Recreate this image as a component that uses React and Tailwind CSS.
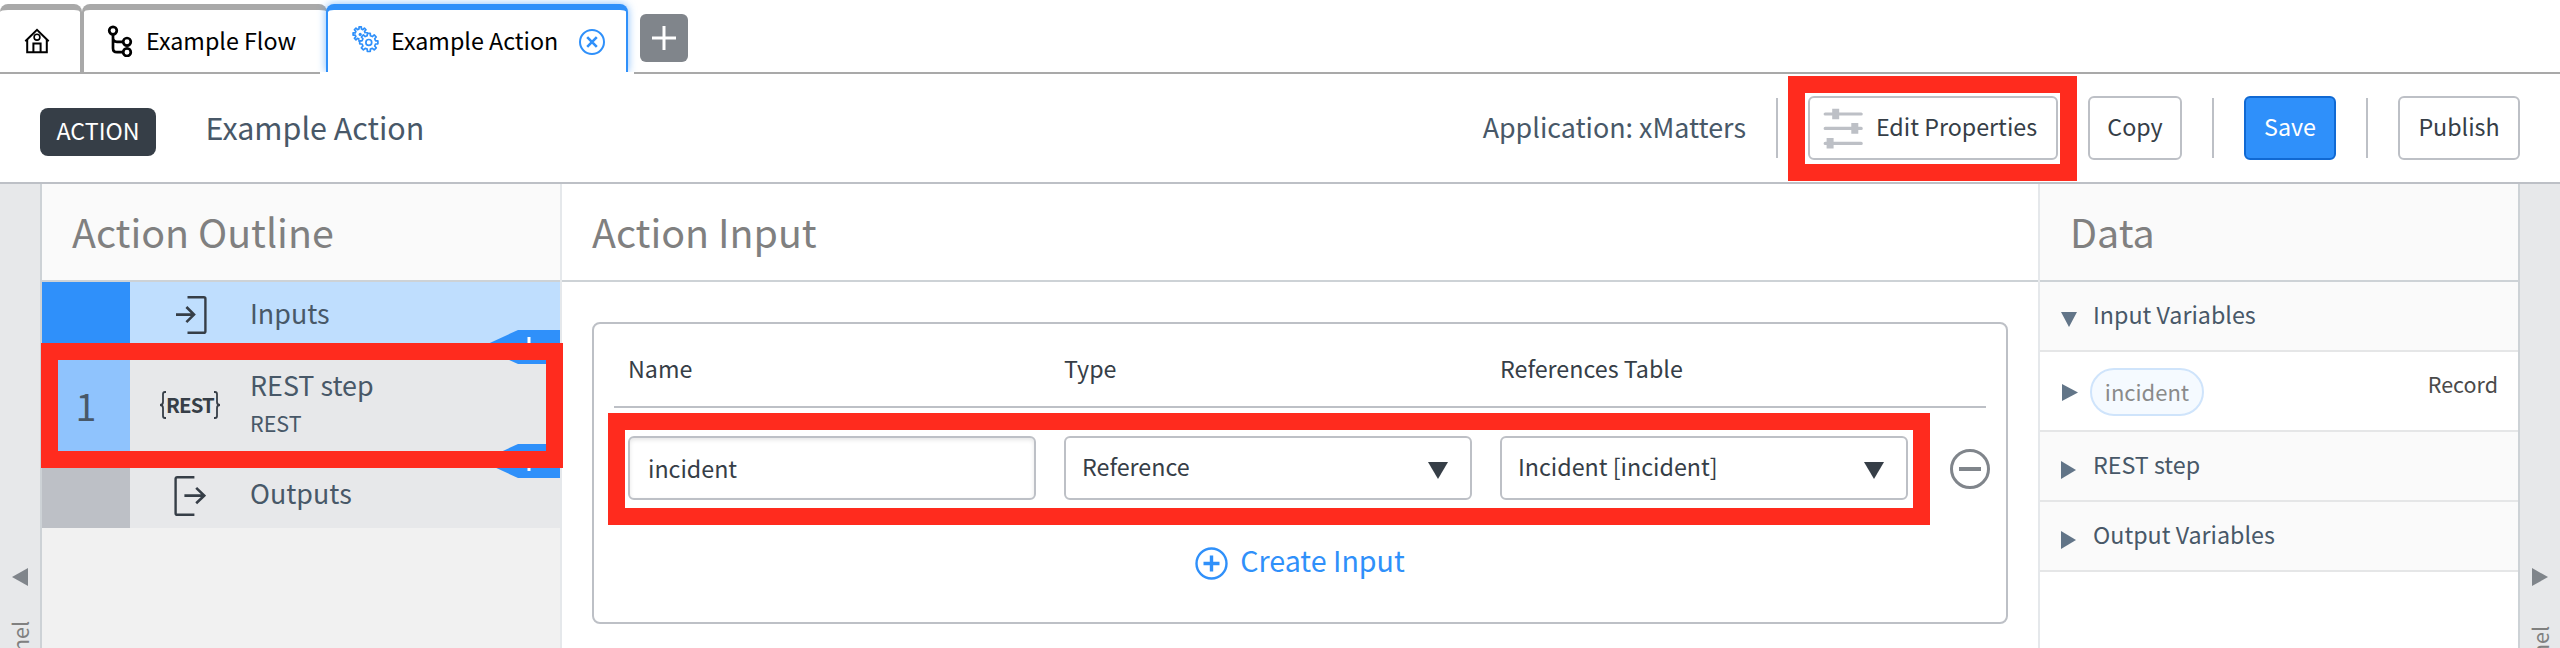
import React from "react";

function gearPath(cx, cy, outer, inner, teeth) {
  const pts = [];
  const step = (Math.PI * 2) / teeth;
  for (let i = 0; i < teeth; i++) {
    const a = i * step - Math.PI / 2;
    [
      [-0.3, inner],
      [-0.2, outer],
      [0.2, outer],
      [0.3, inner],
    ].forEach(([k, r]) => {
      pts.push(`${(cx + Math.cos(a + k * step) * r).toFixed(2)} ${(cy + Math.sin(a + k * step) * r).toFixed(2)}`);
    });
  }
  return `M${pts.join("L")}Z`;
}

function HomeIcon() {
  return (
    <svg className="h-[26px] w-[26px]" viewBox="0 0 26 26" fill="none" stroke="#000" strokeWidth="2">
      <path d="M1.3 13.2 13 1.8l11.7 11.4" />
      <path d="M3.2 11.5v12.8h19.6V11.5" />
      <circle cx="13" cy="9.2" r="2.9" strokeWidth="1.6" />
      <path d="M9.4 24v-8.4h7.2V24" />
    </svg>
  );
}

function FlowIcon() {
  return (
    <svg className="h-8 w-[26px]" viewBox="0 0 26 32" fill="none" stroke="#000" strokeWidth="2.7">
      <circle cx="6" cy="5.6" r="3.8" />
      <circle cx="20" cy="16.8" r="3.8" />
      <circle cx="20" cy="27.2" r="3.8" />
      <path d="M6 9.4v13.8q0 4 4 4h6M6 13q0 3.8 4 3.8h6" />
    </svg>
  );
}

function GearsIcon() {
  return (
    <svg className="h-7 w-7" viewBox="0 0 28 28" fill="none" stroke="#2f90fa" strokeWidth="1.7" strokeLinejoin="round">
      <path d={gearPath(9.2, 9, 7.2, 5.1, 8)} />
      <circle cx="9.2" cy="9.4" r="1.6" fill="#2f90fa" stroke="none" />
      <circle cx="17.8" cy="17.4" r="9.6" fill="#fff" stroke="none" />
      <path d={gearPath(17.8, 17.4, 9.2, 6.9, 8)} fill="#fff" />
      <circle cx="17.8" cy="17.4" r="2.9" />
    </svg>
  );
}

function CloseIcon() {
  return (
    <svg className="size-[26px]" viewBox="0 0 26 26" fill="none" stroke="#2f90fa">
      <circle cx="13" cy="13" r="12" strokeWidth="2" />
      <path d="m8.2 8.2 9.6 9.6m0-9.6-9.6 9.6" strokeWidth="2.6" />
    </svg>
  );
}

function SlidersIcon() {
  return (
    <svg className="h-[44px] w-10" viewBox="0 0 40 44" stroke="#bdc0c6" fill="#bdc0c6">
      <path d="M2.2 8h36M2.2 22.4h36M2.2 37.4h36" strokeWidth="3.2" strokeLinecap="round" />
      <path stroke="none" d="M9.2 2.7h7v10.6h-7zM28.3 17h7v10.8h-7zM3.6 32h7v10.6h-7z" />
    </svg>
  );
}

function InputsIcon() {
  return (
    <svg className="h-10 w-8" viewBox="0 0 32 40" fill="none" stroke="#363e47" strokeWidth="2.4">
      <path d="M12.5 2.2h16.3q1.6 0 1.6 1.6v32.4q0 1.6-1.6 1.6H12.5" />
      <path d="M1 19.6h18.6M11.4 12l7.6 7.6-7.6 7.6" strokeWidth="2.6" />
    </svg>
  );
}

function OutputsIcon() {
  return (
    <svg className="h-10 w-8" viewBox="0 0 32 40" fill="none" stroke="#363e47" strokeWidth="2.4">
      <path d="M20.4 1.2H3.2q-1.6 0-1.6 1.6v34.4q0 1.6 1.6 1.6h17.2" />
      <path d="M10.4 19.6h20M22.2 11.9l8 7.7-8 7.7" strokeWidth="2.6" />
    </svg>
  );
}

function RestIcon() {
  return (
    <div className="flex h-7 w-[60px] items-center justify-between text-[#363e47]">
      <svg className="h-7 w-[6px]" viewBox="0 0 6 28" fill="none" stroke="#363e47" strokeWidth="1.8">
        <path d="M6 1H5Q3 1 3 3v8q0 3-3 3q3 0 3 3v8q0 2 2 2h1" />
      </svg>
      <span className="-mx-1 pb-[2px] text-[20.4px] leading-7 font-bold tracking-[-0.9px]">REST</span>
      <svg className="h-7 w-[6px]" viewBox="0 0 6 28" fill="none" stroke="#363e47" strokeWidth="1.8">
        <path d="M0 1h1Q3 1 3 3v8q0 3 3 3q-3 0-3 3v8q0 2-2 2H0" />
      </svg>
    </div>
  );
}

function AddStepTag() {
  return (
    <svg className="h-[34px] w-[79px]" viewBox="0 0 79 34">
      <path d="M0 17 37 0h42v34H37z" fill="#2f90fa" />
      <path d="M48 7v20M38 17h20" stroke="#fff" strokeWidth="3" />
    </svg>
  );
}

function Down({ className }) {
  return (
    <svg className={className} viewBox="0 0 20 17" preserveAspectRatio="none" fill="currentColor">
      <path d="M0 0h20L10 17z" />
    </svg>
  );
}

function Right({ className }) {
  return (
    <svg className={className} viewBox="0 0 16 18" preserveAspectRatio="none" fill="currentColor">
      <path d="M0 0v18l16-9z" />
    </svg>
  );
}

function Button({ className, children }) {
  return (
    <button className={`flex h-16 items-center justify-center rounded-md border-2 pb-1 text-[23.28px] leading-8 whitespace-nowrap ${className}`}>
      {children}
    </button>
  );
}

function Divider({ className }) {
  return <div className={`h-[60px] w-[2px] bg-[#bdc0c6] ${className}`} />;
}

function Highlight({ className }) {
  return <div className={`pointer-events-none absolute z-20 border-[17px] border-[#ff2b1e] ${className}`} />;
}

function Tabs() {
  return (
    <nav className="flex h-[74px] items-start border-b-2 border-[#a9a9a9] pt-1 text-[23.28px] text-black">
      <div className="flex h-[68px] w-[82px] items-center rounded-t-lg border-t-[6px] border-r-2 border-[#a9a9a9] pb-[1px] pl-6">
        <HomeIcon />
      </div>
      <div className="flex h-[68px] w-[245px] items-center rounded-t-lg border-t-[6px] border-l-2 border-[#a9a9a9] pl-[23px]">
        <FlowIcon />
        <span className="pb-[2px] pl-[13px] leading-8 whitespace-nowrap">Example Flow</span>
      </div>
      <div className="relative -ml-px h-[68px] w-[302px]">
        <div className="flex h-[68px] items-center rounded-t-lg border-x-2 border-t-[6px] border-[#2f90fa] bg-white pl-[23px] shadow-[0_0_8px_#2f90fa99] [clip-path:inset(-12px_-12px_0_-12px)]">
          <span className="pb-[5px]">
            <GearsIcon />
          </span>
          <span className="pb-[2px] pl-[12px] leading-8 whitespace-nowrap">Example Action</span>
          <span className="pt-[2px] pl-[21px]">
            <CloseIcon />
          </span>
        </div>
        <div className="absolute -bottom-[2px] -left-[6px] h-[2px] w-[314px] bg-white" />
      </div>
      <div className="mt-[10px] ml-3 flex size-12 items-center justify-center rounded-md bg-[#80858b]">
        <svg className="size-6" viewBox="0 0 24 24" stroke="#fff" strokeWidth="3">
          <path d="M12 0v24M0 12h24" />
        </svg>
      </div>
    </nav>
  );
}

function Toolbar() {
  return (
    <header className="flex h-[110px] items-center border-b-2 border-[#bdc0c6] pr-10 pl-10 text-[#363e47]">
      <span className="mt-2 flex h-12 w-[116px] items-center justify-center rounded-lg bg-[#363e47] pb-1 text-[23.28px] leading-8 text-white">ACTION</span>
      <span className="pb-[2px] pl-[49.5px] text-[30.44px] leading-10 whitespace-nowrap text-[#485868]">Example Action</span>
      <span className="ml-auto pb-[2px] text-[26.86px] leading-10 whitespace-nowrap text-[#485868]">Application: xMatters</span>
      <Divider className="ml-[30px]" />
      <div className="relative ml-[30px]">
        <Button className="w-[250px] gap-[13px] border-[#bdc0c6] !pb-0 pr-[6px]">
          <SlidersIcon />
          <span className="pb-1">Edit Properties</span>
        </Button>
        <Highlight className="-top-5 -left-5 h-[105px] w-[289px]" />
      </div>
      <Button className="ml-[30px] w-[94px] border-[#bdc0c6]">Copy</Button>
      <Divider className="ml-[30px]" />
      <Button className="ml-[30px] w-[92px] border-[#1069d3] bg-[#2f90fa] text-white">Save</Button>
      <Divider className="ml-[30px]" />
      <Button className="ml-[30px] w-[122px] border-[#bdc0c6]">Publish</Button>
    </header>
  );
}

function PanelTitle({ className, children }) {
  return (
    <h2 className={`flex h-[98px] items-center border-b-2 border-[#cdd2d6] pb-[2px] text-[39.39px] leading-[48px] text-[#808080] ${className}`}>
      {children}
    </h2>
  );
}

function Outline() {
  return (
    <section className="w-[522px] border-x-2 border-l-[#cdd2d6] border-r-[#e5e8eb] bg-[#f1f1f1]">
      <PanelTitle className="bg-[#fafafa] pl-[30px]">Action Outline</PanelTitle>
      <div className="relative text-[26.86px] text-[#485868]">
        <div className="flex h-[66px] bg-[#bfdefe]">
          <div className="w-[88px] bg-[#2f90fa]" />
          <div className="flex w-[120px] items-center pl-[45px]">
            <InputsIcon />
          </div>
          <span className="pt-[11px] leading-10">Inputs</span>
        </div>
        <div className="flex h-[114px] bg-[#e7e8ea]">
          <div className="flex w-[88px] items-center justify-center bg-[#8fc3fd] text-[37.6px]">1</div>
          <div className="flex w-[120px] items-center pl-[30px]">
            <RestIcon />
          </div>
          <div className="flex flex-col pt-[19px]">
            <span className="leading-9">REST step</span>
            <span className="text-[21.49px] leading-[39px]">REST</span>
          </div>
        </div>
        <div className="flex h-[66px] bg-[#e7e8ea]">
          <div className="w-[88px] bg-[#bdc0c6]" />
          <div className="flex w-[120px] items-center pt-[2px] pl-[44px]">
            <OutputsIcon />
          </div>
          <span className="pt-[11px] leading-10">Outputs</span>
        </div>
        <div className="absolute top-[48px] right-0">
          <AddStepTag />
        </div>
        <div className="absolute top-[162px] right-0">
          <AddStepTag />
        </div>
        <Highlight className="top-[61px] -left-px h-[125px] w-[522px]" />
      </div>
    </section>
  );
}

function Select({ children }) {
  return (
    <div className="flex h-16 w-[408px] items-center justify-between rounded-md border-2 border-[#bdc0c6] pr-[22px] pl-4">
      <span className="pb-1 leading-8 whitespace-nowrap">{children}</span>
      <Down className="mt-1 h-[17px] w-5" />
    </div>
  );
}

function ActionInput() {
  return (
    <main className="flex-1 bg-white">
      <PanelTitle className="pl-[30px]">Action Input</PanelTitle>
      <div className="mt-10 ml-[30px] h-[302px] w-[1416px] rounded-lg border-2 border-[#bdc0c6] px-5 text-[23.28px] text-[#363e47]">
        <div className="flex h-[84px] items-center border-b-2 border-[#bdc0c6] pt-[6px] pl-[14px] leading-8">
          <span className="w-[436px]">Name</span>
          <span className="w-[436px]">Type</span>
          <span>References Table</span>
        </div>
        <div className="relative mt-7 flex items-center pl-[14px]">
          <div className="flex gap-7">
            <div className="flex h-16 w-[408px] items-center rounded-md border-2 border-[#bdc0c6] pl-[18px] leading-8 shadow-[inset_0_2px_4px_#0000001a]">incident</div>
            <Select>Reference</Select>
            <Select>Incident [incident]</Select>
          </div>
          <svg className="mt-[2px] ml-[42px] size-10 shrink-0" viewBox="0 0 40 40" fill="none" stroke="#80858b">
            <circle cx="20" cy="20" r="18.5" strokeWidth="3" />
            <path d="M9 20h22" strokeWidth="4" />
          </svg>
          <Highlight className="-top-[23px] -left-[6px] h-[112px] w-[1322px]" />
        </div>
        <div className="mt-10 flex items-center justify-center text-[#2f90fa]">
          <svg className="mt-[7px] size-[33px]" viewBox="0 0 33 33" fill="none" stroke="#2f90fa">
            <circle cx="16.5" cy="16.5" r="15" strokeWidth="2.4" />
            <path d="M16.5 8.5v16M8.5 16.5h16" strokeWidth="3.4" />
          </svg>
          <span className="pl-[12px] text-[28.65px] leading-10">Create Input</span>
        </div>
      </div>
    </main>
  );
}

function DataRow({ open, children }) {
  return (
    <div className="flex h-[70px] items-center border-b-2 border-[#e5e6e7] bg-[#fafafa] pl-[21px]">
      {open ? <Down className="mt-[6px] h-[15px] w-4 text-[#627588]" /> : <Right className="mt-[7px] h-[18px] w-[15px] text-[#627588]" />}
      <span className={`pb-1 leading-8 ${open ? "pl-4" : "pl-[17px]"}`}>{children}</span>
    </div>
  );
}

function DataPanel() {
  return (
    <section className="w-[482px] border-x-2 border-l-[#e5e8eb] border-r-[#cdd2d6] bg-white text-[23.28px] text-[#485868]">
      <PanelTitle className="bg-[#fafafa] pl-[30px]">Data</PanelTitle>
      <DataRow open>Input Variables</DataRow>
      <div className="flex h-20 items-center border-b-2 border-[#e5e6e7] pr-5 pl-[22px]">
        <Right className="mt-[2px] h-[17px] w-4 text-[#627588]" />
        <span className="mt-[2px] ml-3 flex h-12 w-[114px] items-center justify-center rounded-full border-2 border-[#cfe4fb] bg-[#f5faff] pb-[3px] text-[22px] leading-8 text-[#8a8a8a]">incident</span>
        <span className="ml-auto pb-[14px] text-[21.49px] leading-8 text-[#4a4a4a]">Record</span>
      </div>
      <DataRow>REST step</DataRow>
      <DataRow>Output Variables</DataRow>
    </section>
  );
}

function Gutter({ side }) {
  const left = side === "left";
  return (
    <aside className="flex w-10 flex-col items-center overflow-hidden bg-[#e7e8ea] pt-[384px] text-[#80858b]">
      <Right className={`h-[18px] w-4 shrink-0 ${left ? "rotate-180" : ""}`} />
      <span className={`rotate-180 text-[21.49px] leading-10 whitespace-nowrap text-[#808080] [writing-mode:vertical-rl] ${left ? "mt-[35px]" : "mt-[40px]"}`}>Panel</span>
    </aside>
  );
}

export default function App() {
  return (
    <div className="flex h-[648px] w-[2560px] flex-col overflow-hidden bg-white font-['Noto_Sans_CJK_SC','Open_Sans',sans-serif]">
      <Tabs />
      <Toolbar />
      <div className="flex h-[464px]">
        <Gutter side="left" />
        <Outline />
        <ActionInput />
        <DataPanel />
        <Gutter side="right" />
      </div>
    </div>
  );
}
